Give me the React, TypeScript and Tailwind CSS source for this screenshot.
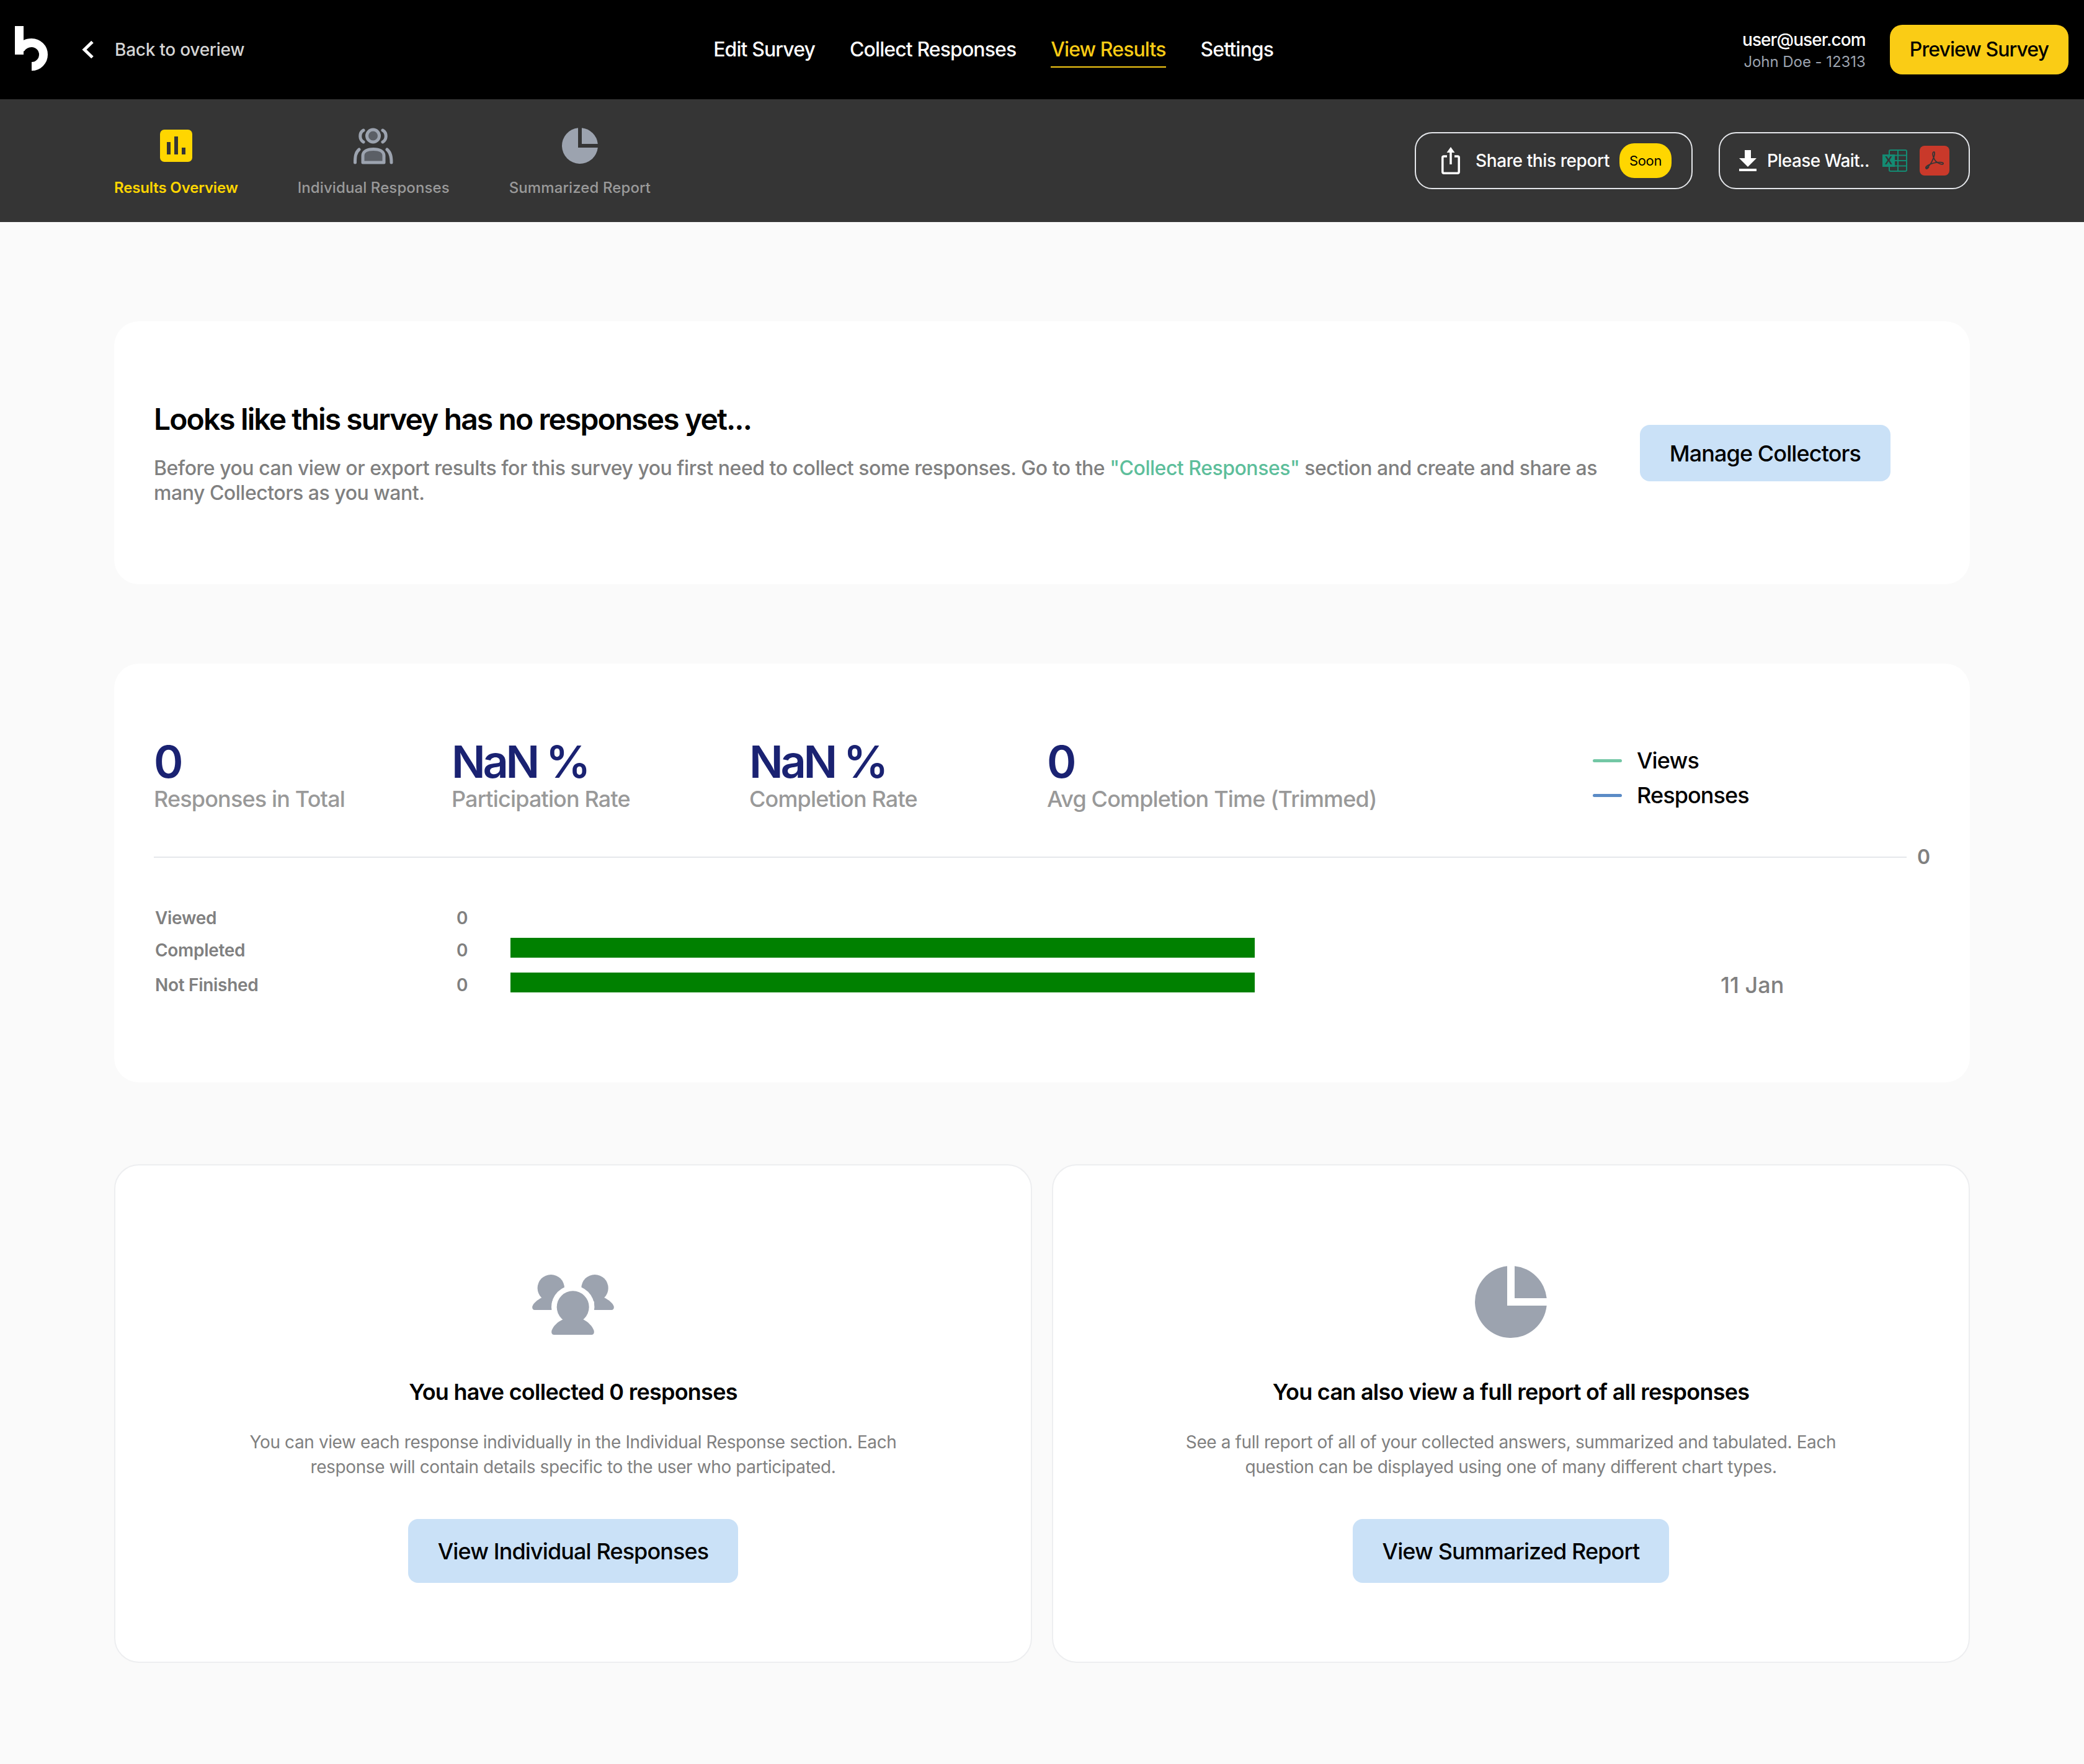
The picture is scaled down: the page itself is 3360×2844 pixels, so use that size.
const NAV = [
  { label: "Edit Survey", active: false },
  { label: "Collect Responses", active: false },
  { label: "View Results", active: true },
  { label: "Settings", active: false },
]

const STATS = [
  { value: "0", label: "Responses in Total" },
  { value: "NaN %", label: "Participation Rate" },
  { value: "NaN %", label: "Completion Rate" },
  { value: "0", label: "Avg Completion Time (Trimmed)" },
]

function Logo() {
  return (
    <svg width="56" height="76" viewBox="0 0 56 76" className="shrink-0" fill="none" stroke="#fff">
      <path d="M7 0V46" strokeWidth="14" />
      <path d="M0 39H14" strokeWidth="14" />
      <path d="M9 37C14 29 20 27 27 27A19 19 0 0 1 27 65" strokeWidth="14" />
    </svg>
  )
}

function ResultsIcon() {
  return (
    <svg width="52" height="52" viewBox="0 0 52 52">
      <rect width="52" height="52" rx="7" fill="#FFD600" />
      <rect x="11" y="20" width="6" height="20" fill="#353535" />
      <rect x="23" y="11" width="6" height="29" fill="#353535" />
      <rect x="35" y="29" width="6" height="11" fill="#353535" />
    </svg>
  )
}

function IndividualIcon() {
  return (
    <svg width="64" height="60" viewBox="0 0 64 60" fill="none" stroke="#9CA3AF" strokeWidth="5" strokeLinecap="round">
      <circle cx="31.5" cy="14" r="10" fill="#5B5F66" />
      <path d="M16 5C9 9 9 20 16 24" />
      <path d="M47 5C54 9 54 20 47 24" />
      <path d="M15 57V46C15 39 22 35.5 32 35.5C42 35.5 49 39 49 46V57Z" fill="#5B5F66" strokeLinejoin="round" />
      <path d="M9 36C3 41 2.5 48 2.5 57" />
      <path d="M54 36C60 41 61 48 61 57" />
    </svg>
  )
}

function PieIcon({ size }: { size: number }) {
  return (
    <svg width={size} height={size} viewBox="0 0 116 116" fill="#9CA3AF">
      <path d="M52 .3A58 58 0 1 0 115.7 64H52Z" />
      <path d="M64 .3A58 58 0 0 1 115.7 52H64Z" />
    </svg>
  )
}

function PeopleIcon() {
  return (
    <svg width="132" height="97" viewBox="0 0 132 97" fill="#9CA3AF">
      <circle cx="30.3" cy="21.7" r="21.7" />
      <path d="M15.7 37C8 41 2 46 .4 51C-.4 54 1 57 4 57H32V37Z" />
      <circle cx="101" cy="21.7" r="21.7" />
      <path d="M116 37C124 41 130 46 131.6 51C132.4 54 131 57 128 57H100V37Z" />
      <circle cx="65.7" cy="52.3" r="34.7" fill="#fff" />
      <rect x="31" y="57" width="69" height="40" fill="#fff" />
      <circle cx="65.7" cy="52.3" r="26" />
      <path d="M50 72C41 76 34 83 31.5 90C30.5 94 32 97 35 97H96C99 97 100.5 94 99.5 90C97 83 90 76 82 72Z" />
    </svg>
  )
}

function ShareIcon() {
  return (
    <svg width="30" height="44" viewBox="0 0 30 44" fill="none" stroke="#fff" strokeWidth="3.5">
      <path d="M9 15H4C2.5 15 1.8 16 1.8 17V40C1.8 41.5 2.5 42.2 4 42.2H26C27.5 42.2 28.2 41.5 28.2 40V17C28.2 16 27.5 15 26 15H21" />
      <path d="M15 6V28" />
      <path d="M15 0L21.5 9H8.5Z" fill="#fff" stroke="none" />
    </svg>
  )
}

function DownloadIcon() {
  return (
    <svg width="28" height="34" viewBox="0 0 28 34" fill="#fff">
      <path d="M9 0H19V13H28L14 27L0 13H9Z" />
      <rect y="30" width="28" height="4" />
    </svg>
  )
}

function ExcelIcon() {
  return (
    <svg width="40" height="36" viewBox="0 0 40 36" fill="none">
      <rect x="11" y="1" width="28" height="34" rx="2" stroke="#148B73" strokeWidth="2" />
      <path d="M25 1V35M13 9.5H39M13 18H39M13 26.5H39" stroke="#148B73" strokeWidth="2" />
      <rect y="8" width="20" height="20" fill="#148B73" />
      <text x="4" y="24" fontFamily="Liberation Sans, sans-serif" fontWeight="700" fontSize="18" fill="#353535">X</text>
    </svg>
  )
}

function PdfIcon() {
  return (
    <svg width="48" height="48" viewBox="0 0 48 48" fill="none">
      <rect width="48" height="48" rx="8" fill="#C9392A" />
      <path
        d="M11 36C16 33 20 26 23 18C25 12 24 9 22.5 10C20 11 21 19 26 25C30 29 37 31 38 29C39 26 30 26 22 28C16 30 9 33 10 36C10.5 38 13 37 15 34"
        stroke="#353535"
        strokeWidth="1.8"
      />
    </svg>
  )
}

function BlueButton({ label, className }: { label: string; className: string }) {
  return (
    <button className={`shrink-0 bg-[#CAE1F7] rounded-[16px] px-[48px] text-[36px] font-medium tracking-[-0.9px] text-black ${className}`}>
      {label}
    </button>
  )
}

function InfoCard({ icon, title, text, action }: { icon: React.ReactNode; title: string; text: string; action: string }) {
  return (
    <div className="bg-white border-2 border-[#EDEEF0] rounded-[40px] h-[804px] pt-[162px] flex flex-col items-center">
      <div className="h-[116px] flex justify-center">{icon}</div>
      <h3 className="mt-[63px] text-[36px] leading-[48px] font-semibold tracking-[-0.75px] text-black">{title}</h3>
      <p className="mt-[37px] max-w-[1100px] text-center text-[28px] leading-[40px] tracking-[-0.4px] text-[#808080]">{text}</p>
      <BlueButton label={action} className="mt-[64px] h-[103px]" />
    </div>
  )
}

export default function App() {
  return (
    <div className="min-h-[2844px] bg-[#FAFAFA] font-['Inter',sans-serif]">
      {/* Top bar */}
      <header className="h-[160px] bg-black flex items-center justify-between pl-[24px] pr-[25px]">
        <div className="flex items-center">
          <Logo />
          <svg width="20" height="30" viewBox="0 0 20 30" fill="none" stroke="#fff" strokeWidth="5" className="ml-[52px]">
            <path d="M17 2.5L4 15L17 27.5" />
          </svg>
          <span className="ml-[33px] text-[28px] font-medium tracking-[-0.25px] text-[#D4D4D4]">Back to overiew</span>
        </div>
        <nav className="flex items-center gap-[56px]">
          {NAV.map(item => (
            <a
              key={item.label}
              className={`relative text-[32px] leading-[40px] font-medium tracking-[-0.9px] ${item.active ? "text-[#FACC15]" : "text-white"}`}
            >
              {item.label}
              {item.active && <span className="absolute left-0 right-0 top-[47px] h-[2px] bg-[#FACC15]" />}
            </a>
          ))}
        </nav>
        <div className="flex items-center">
          <div className="text-right pt-[4px]">
            <p className="text-[28px] leading-[36px] font-medium tracking-[-0.9px] text-white">user@user.com</p>
            <p className="text-[24px] leading-[36px] tracking-[-0.05px] text-[#9CA3AF]">John Doe - 12313</p>
          </div>
          <button className="ml-[39px] h-[80px] px-[32px] rounded-[20px] bg-[#FACC15] text-[32px] font-medium tracking-[-0.95px] text-black">
            Preview Survey
          </button>
        </div>
      </header>

      {/* Sub navigation */}
      <div className="h-[198px] bg-[#353535] flex items-center justify-between px-[184px]">
        <div className="flex gap-[96px] pt-[6px]">
          <div className="flex flex-col items-center">
            <div className="h-[60px] flex items-center"><ResultsIcon /></div>
            <span className="mt-[22px] text-[24px] leading-[32px] font-semibold tracking-[-0.15px] text-[#FFD600]">Results Overview</span>
          </div>
          <div className="flex flex-col items-center">
            <div className="h-[60px] flex items-center"><IndividualIcon /></div>
            <span className="mt-[22px] text-[24px] leading-[32px] font-medium tracking-[0.1px] text-[#9A9A9A]">Individual Responses</span>
          </div>
          <div className="flex flex-col items-center">
            <div className="h-[60px] flex items-center"><PieIcon size={58} /></div>
            <span className="mt-[22px] text-[24px] leading-[32px] font-medium tracking-[0.1px] text-[#9A9A9A]">Summarized Report</span>
          </div>
        </div>
        <div className="flex gap-[42px]">
          <button className="h-[92px] w-[448px] border-2 border-[#E5E7EB] rounded-[28px] flex items-center pl-[41px] text-[28px] font-medium tracking-[-0.4px] text-white">
            <ShareIcon />
            <span className="ml-[25px]">Share this report</span>
            <span className="ml-[16px] h-[56px] w-[84px] rounded-[24px] bg-[#FFD600] flex items-center justify-center text-[22px] font-normal text-black">
              Soon
            </span>
          </button>
          <button className="h-[92px] w-[405px] border-2 border-[#E5E7EB] rounded-[28px] flex items-center pl-[31px] text-[28px] font-medium tracking-[-0.6px] text-white">
            <DownloadIcon />
            <span className="ml-[17px]">Please Wait..</span>
            <span className="ml-[21px]"><ExcelIcon /></span>
            <span className="ml-[20px]"><PdfIcon /></span>
          </button>
        </div>
      </div>

      <main className="px-[184px] pt-[160px]">
        {/* Empty notice */}
        <section className="bg-white rounded-[40px] pt-[128px] pb-[127px] pl-[64px] pr-[128px] flex items-center gap-[64px]">
          <div className="flex-1">
            <h2 className="pt-[2px] text-[48px] leading-[56px] font-semibold tracking-[-1.9px] text-black">
              Looks like this survey has no responses yet...
            </h2>
            <p className="mt-[31px] text-[32px] leading-[40px] font-medium tracking-[-0.48px] text-[#808080]">
              Before you can view or export results for this survey you first need to collect some responses. Go to the{" "}
              <span className="text-[#5DBE9B]">"Collect Responses"</span> section and create and share as many Collectors as you want.
            </p>
          </div>
          <BlueButton label="Manage Collectors" className="h-[91px]" />
        </section>

        {/* Stats */}
        <section className="mt-[128px] bg-white rounded-[40px] pt-[122px] pb-[137px] pl-[64px] pr-[64px]">
          <div className="flex">
            <div className="grid grid-cols-[480px_480px_480px_480px]">
              {STATS.map(stat => (
                <div key={stat.label} className="whitespace-nowrap">
                  <p className="text-[72px] leading-[72px] font-semibold tracking-[-4.2px] text-[#1A2272]">{stat.value}</p>
                  <p className="mt-[2px] text-[36px] leading-[44px] font-medium tracking-[-0.85px] text-[#999999]">{stat.label}</p>
                </div>
              ))}
            </div>
            <div className="ml-[400px] pt-[6px] text-[36px] leading-[56px] font-medium tracking-[-0.9px] text-black">
              <div className="flex items-center gap-[24px]">
                <span className="w-[47px] h-[5px] rounded-full bg-[#73C7A5]" />
                Views
              </div>
              <div className="flex items-center gap-[24px]">
                <span className="w-[47px] h-[5px] rounded-full bg-[#5B8BC6]" />
                Responses
              </div>
            </div>
          </div>

          <div className="mt-[56px] flex items-center">
            <div className="flex-1 h-[2px] bg-[#E5E7EB]" />
            <span className="ml-[17px] text-[32px] leading-[32px] font-semibold text-[#808080]">0</span>
          </div>

          <div className="mt-[62px] text-[28px] leading-[40px] font-semibold tracking-[-0.3px] text-[#808080]">
            <div className="flex">
              <span className="w-[488px] pl-[2px]">Viewed</span>
              <span>0</span>
            </div>
            <div className="mt-[12px] flex">
              <span className="w-[488px] pl-[2px]">Completed</span>
              <span className="w-[87px]">0</span>
              <div className="w-[1200px] h-[32px] bg-[#008000]" />
            </div>
            <div className="mt-[16px] flex">
              <span className="w-[488px] pl-[2px]">Not Finished</span>
              <span className="w-[87px]">0</span>
              <div className="w-[1200px] h-[32px] bg-[#008000]" />
              <span className="ml-[751px] text-[36px] font-medium tracking-normal">11 Jan</span>
            </div>
          </div>
        </section>

        {/* Links to other views */}
        <section className="mt-[132px] grid grid-cols-2 gap-[32px]">
          <InfoCard
            icon={<div className="pt-[14px]"><PeopleIcon /></div>}
            title="You have collected 0 responses"
            text="You can view each response individually in the Individual Response section. Each response will contain details specific to the user who participated."
            action="View Individual Responses"
          />
          <InfoCard
            icon={<PieIcon size={116} />}
            title="You can also view a full report of all responses"
            text="See a full report of all of your collected answers, summarized and tabulated. Each question can be displayed using one of many different chart types."
            action="View Summarized Report"
          />
        </section>
      </main>
    </div>
  )
}
